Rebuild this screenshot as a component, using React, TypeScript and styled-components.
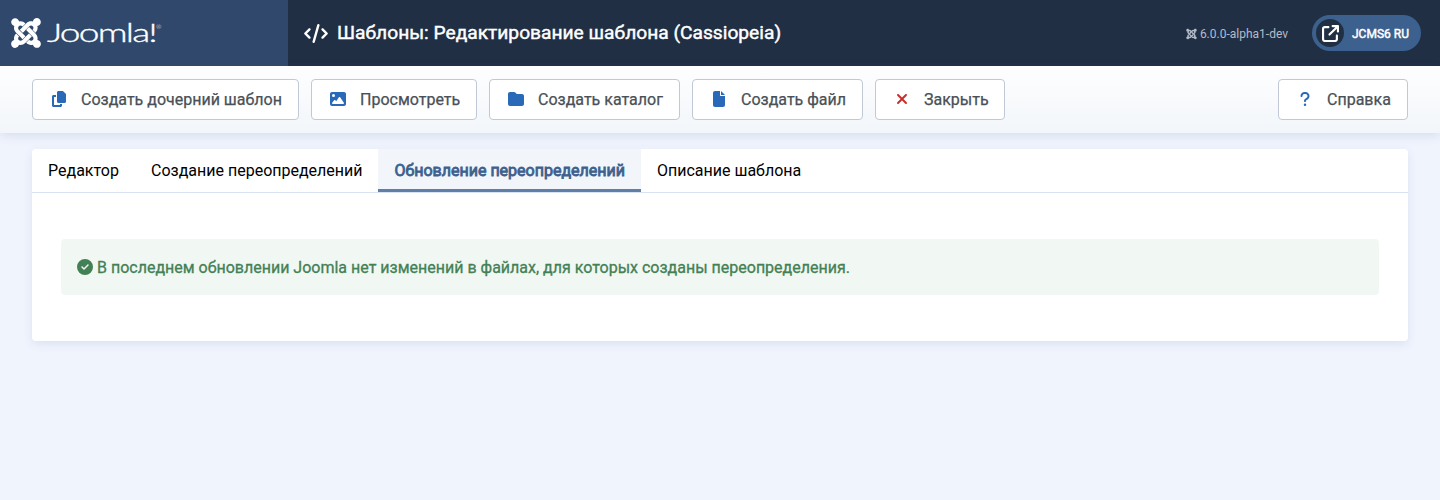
import React from "react";
import styled, { createGlobalStyle } from "styled-components";
import {
  FaJoomla, FaCode, FaCopy, FaImage, FaFolder, FaFile, FaXmark, FaQuestion,
  FaCircleCheck, FaArrowUpRightFromSquare,
} from "react-icons/fa6";

const GlobalStyle = createGlobalStyle`
  * { box-sizing: border-box; }
  body {
    margin: 0;
    min-height: 100vh;
    background: #f0f4fd;
    font-family: Roboto, "Liberation Sans", sans-serif;
    font-size: 16px;
    line-height: 24px;
    color: #000;
    overflow: hidden;
  }
`;

const Header = styled.header`
  display: flex;
  height: 66px;
  background: #212f45;
  color: #fff;
`;

const Brand = styled.div`
  display: flex;
  align-items: center;
  width: 288px;
  padding-left: 11px;
  background: #2f486b;
`;

const BrandMark = styled(FaJoomla)`
  width: 30px;
  height: 34px;
`;

const Wordmark = styled.svg`
  width: 124px;
  height: 36px;
  margin-left: 2px;
  fill: #fff;
  stroke: #fff;
  font-family: Lato, sans-serif;
  font-weight: 300;
`;

const Title = styled.h1`
  display: flex;
  align-items: center;
  flex: 1;
  gap: 9px;
  margin: 0;
  padding-left: 16px;
  font-size: 19.2px;
  font-weight: 400;
  white-space: nowrap;
  svg { width: 24px; height: 19px; }
  span { -webkit-text-stroke: 0.45px currentColor; }
`;

const Version = styled.div`
  display: flex;
  align-items: center;
  gap: 3px;
  margin-right: 24px;
  padding-top: 1px;
  color: #b4bcc9;
  font-size: 12px;
  svg { width: 11px; height: 12px; }
`;

const SiteLink = styled.a`
  display: flex;
  align-items: center;
  align-self: center;
  gap: 8px;
  width: 109px;
  height: 36px;
  margin: 0 19px 0 0;
  padding-left: 4px;
  border-radius: 18px;
  background: #3d618f;
  font-size: 12px;
  font-weight: 400;
  white-space: nowrap;
  > span:last-child { padding-top: 1px; -webkit-text-stroke: 0.45px currentColor; }
`;

const SiteLinkIcon = styled.span`
  display: grid;
  place-items: center;
  width: 28px;
  height: 28px;
  border-radius: 50%;
  background: #212f45;
  svg { width: 17px; height: 17px; }
`;

const Toolbar = styled.nav`
  display: flex;
  gap: 12px;
  height: 67px;
  padding: 13px 32px;
  background: linear-gradient(#fefeff, #f2f6fa);
  box-shadow: 0 3px 10px rgba(40, 70, 130, 0.12);
`;

const ToolButton = styled.button<{ $width: number; $tone?: string; $end?: boolean }>`
  display: flex;
  align-items: center;
  width: ${(p) => p.$width}px;
  height: 41px;
  margin-left: ${(p) => (p.$end ? "auto" : "0")};
  padding: 0 0 0 16px;
  border: 1px solid #c0c9d5;
  border-radius: 4px;
  background: #fff;
  color: #495057;
  font: 400 16px/24px Roboto, sans-serif;
  white-space: nowrap;
  svg { height: 16px; width: 20px; margin: -1px 12px 0 0; color: ${(p) => p.$tone ?? "#2a69b8"}; }
  span { -webkit-text-stroke: 0.25px currentColor; }
`;

const Panel = styled.main`
  height: 192px;
  margin: 16px 32px 0;
  border-radius: 4px;
  background: #fff;
  box-shadow: 0 3px 10px rgba(40, 70, 130, 0.1);
`;

const Tabs = styled.div`
  display: flex;
  height: 44px;
  border-bottom: 1px solid #d9e2f0;
`;

const Tab = styled.div<{ $width: number; $active?: boolean }>`
  width: ${(p) => p.$width}px;
  height: 43px;
  padding: 10px 0 0 16px;
  white-space: nowrap;
  ${(p) => p.$active && `
    padding-left: 16.5px;
    background: #f2f6fa;
    color: #3d618f;
    -webkit-text-stroke: 0.85px currentColor;
    box-shadow: inset 0 -3px #5f7fa8;
  `}
`;

const Notice = styled.div`
  display: flex;
  align-items: center;
  gap: 4px;
  height: 56px;
  margin: 46px 29px 0;
  padding-left: 16px;
  border-radius: 4px;
  background: #f1f8f4;
  color: #448055;
  svg { width: 16px; height: 16px; }
  span { padding-top: 1px; -webkit-text-stroke: 0.3px currentColor; }
`;

const actions = [
  { label: "Создать дочерний шаблон", Icon: FaCopy, width: 267 },
  { label: "Просмотреть", Icon: FaImage, width: 166 },
  { label: "Создать каталог", Icon: FaFolder, width: 191 },
  { label: "Создать файл", Icon: FaFile, width: 171 },
  { label: "Закрыть", Icon: FaXmark, width: 130, tone: "#c9302c" },
];

const tabs = [
  { label: "Редактор", width: 103 },
  { label: "Создание переопределений", width: 243 },
  { label: "Обновление переопределений", width: 263, active: true },
  { label: "Описание шаблона", width: 177 },
];

export default function App() {
  return (
    <>
      <GlobalStyle />
      <Header>
        <Brand>
          <BrandMark />
          <Wordmark viewBox="0 0 124 36">
            <text x="4" y="27" fontSize="25" strokeWidth="0.35" letterSpacing="-1.2" textLength="109" lengthAdjust="spacingAndGlyphs">Joomla!</text>
            <text x="113" y="14" fontSize="6.5" strokeWidth="0">®</text>
          </Wordmark>
        </Brand>
        <Title><FaCode /><span>Шаблоны: Редактирование шаблона (Cassiopeia)</span></Title>
        <Version><FaJoomla />6.0.0-alpha1-dev</Version>
        <SiteLink><SiteLinkIcon><FaArrowUpRightFromSquare /></SiteLinkIcon><span>JCMS6 RU</span></SiteLink>
      </Header>
      <Toolbar>
        {actions.map(({ label, Icon, width, tone }) => (
          <ToolButton key={label} $width={width} $tone={tone}><Icon /><span>{label}</span></ToolButton>
        ))}
        <ToolButton $width={130} $end><FaQuestion /><span>Справка</span></ToolButton>
      </Toolbar>
      <Panel>
        <Tabs>
          {tabs.map((t) => <Tab key={t.label} $width={t.width} $active={t.active}>{t.label}</Tab>)}
        </Tabs>
        <Notice><FaCircleCheck /><span>В последнем обновлении Joomla нет изменений в файлах, для которых созданы переопределения.</span></Notice>
      </Panel>
    </>
  );
}
